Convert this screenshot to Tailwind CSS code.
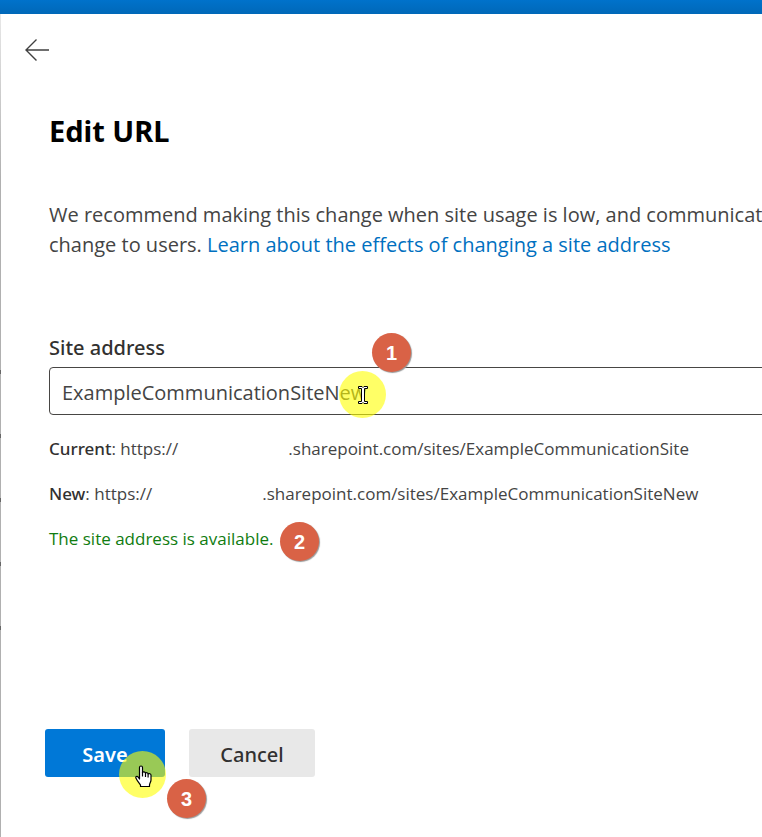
<!DOCTYPE html>
<html lang="en">
  <head>
    <meta charset="UTF-8" />
    <meta name="viewport" content="width=device-width, initial-scale=1.0" />
    <title>Edit URL</title>
    <script src="https://cdn.jsdelivr.net/npm/@tailwindcss/browser@4"></script>
  </head>
  <body class="flex flex-col min-h-screen overflow-x-hidden bg-white font-['Noto_Sans',sans-serif] text-[#323130]">
    <header class="h-3.5 bg-linear-to-b from-[#0072cb] to-[#0068b8]"></header>
    <div class="flex flex-1">
      <div class="flex w-px flex-col justify-end gap-[60px] bg-linear-to-b from-[#e8e8e8] via-[#b0b0b0] via-20% to-[#b0b0b0] pb-[207px]">
        <div class="h-1 bg-[#666]"></div>
        <div class="h-1 bg-[#666]"></div>
        <div class="h-1 bg-[#666]"></div>
        <div class="h-1 bg-[#666]"></div>
        <div class="h-1 bg-[#666]"></div>
      </div>
      <main class="min-w-0 flex-1 overflow-hidden pl-12">
        <button type="button" aria-label="Back" class="-ml-6 mt-6 block">
          <svg class="block size-6" viewBox="0 0 24 24" fill="none" stroke="#404040" stroke-width="1.4">
            <path d="M24 12H1M11.500 1.500L1 12l10.500 10.500" />
          </svg>
        </button>

        <h1 class="mt-[51px] text-[29px] leading-9 font-bold text-black">Edit URL</h1>

        <p class="mt-[51px] font-['Open_Sans',sans-serif] text-xl leading-[30px] whitespace-nowrap text-[#444]">
          We recommend making this change when site usage is low, and communicati<br />
          change to users.
          <a href="#" class="text-[#0070c0]">Learn about the effects of changing a site address</a>
        </p>

        <form class="mt-[73px]">
          <label for="address" class="block text-xl leading-[30px] font-medium">Site address</label>
          <div class="relative mt-1 -mr-2">
            <input
              id="address"
              type="text"
              value="ExampleCommunicationSiteNew"
              class="block h-12 w-full rounded-sm border border-[#484644] bg-white px-3 pt-0.5 font-['Open_Sans',sans-serif] text-xl text-[#444] outline-none"
            />
            <div class="absolute -top-[34px] left-[323px] flex size-[39px] items-center justify-center rounded-full bg-[#d96246] font-['Liberation_Sans',sans-serif] text-xl font-bold text-white shadow-[1px_1px_1px_#999]">1</div>
            <div class="absolute top-1 left-[290px] size-[47px] rounded-full bg-[#ffff00]/60"></div>
            <svg class="absolute top-[18px] left-[308px] h-5 w-3" viewBox="0 0 12 20" fill="#fff" stroke="#000">
              <path d="M1.500 1.500h3.500l1 1 1-1h3.500v2h-3v13h3v2h-3.500l-1-1-1 1H1.500v-2h3v-13h-3z" />
            </svg>
          </div>

          <div class="mt-[21px] flex flex-col gap-[19px] font-['Open_Sans',sans-serif] text-[17px] leading-[26px] whitespace-nowrap text-[#444]">
            <p><span class="font-['Noto_Sans',sans-serif] font-medium text-[#323130]">Current</span>: https://<span class="inline-block w-[110px]"></span>.sharepoint.com/sites/ExampleCommunicationSite</p>
            <p><span class="font-['Noto_Sans',sans-serif] font-medium text-[#323130]">New</span>: https://<span class="inline-block w-[110px]"></span>.sharepoint.com/sites/ExampleCommunicationSiteNew</p>
            <p class="relative text-[#107c10]">
              The site address is available.
              <span class="absolute -top-1 left-[231px] flex size-[39px] items-center justify-center rounded-full bg-[#d96246] font-['Liberation_Sans',sans-serif] text-xl font-bold text-white shadow-[1px_1px_1px_#999]">2</span>
            </p>
          </div>

          <div class="mt-[177px] -ml-1 flex gap-6 pb-[60px]">
            <div class="relative">
              <button type="submit" class="h-12 w-[120px] rounded-[3px] bg-[#0078d7] pt-1 text-xl font-semibold text-white">Save</button>
              <div class="absolute top-[22px] left-[74px] size-[47px] rounded-full bg-[#ffff00]/60"></div>
              <svg class="absolute top-9 left-[90px] h-[23px] w-[17px]" viewBox="0 0 17 23" fill="#fff" stroke="#000" stroke-width="1.200" stroke-linejoin="round">
                <path d="M4.500 14V2.500c0-2 3-2 3 0v5c.5-1 2.500-.8 3 .6.800-.8 2.300-.4 2.600.8 1-.6 2.900-.2 2.900 1.300V15c0 2-1.500 3.500-1.500 5v1.500h-9V20C4.500 18 2.500 16.500 1 13.300c-.8-1.800 1-2.600 2-1.500z" />
                <path d="M7.500 7v4.500M10.500 8v4M13.100 9v3.500" />
              </svg>
              <div class="absolute top-[50px] left-[122px] flex size-[39px] items-center justify-center rounded-full bg-[#d96246] font-['Liberation_Sans',sans-serif] text-xl font-bold text-white shadow-[1px_1px_1px_#999]">3</div>
            </div>
            <button type="button" class="h-12 w-[126px] rounded-[3px] bg-[#e8e8e8] pt-1 text-xl font-medium">Cancel</button>
          </div>
        </form>
      </main>
    </div>
  </body>
</html>
